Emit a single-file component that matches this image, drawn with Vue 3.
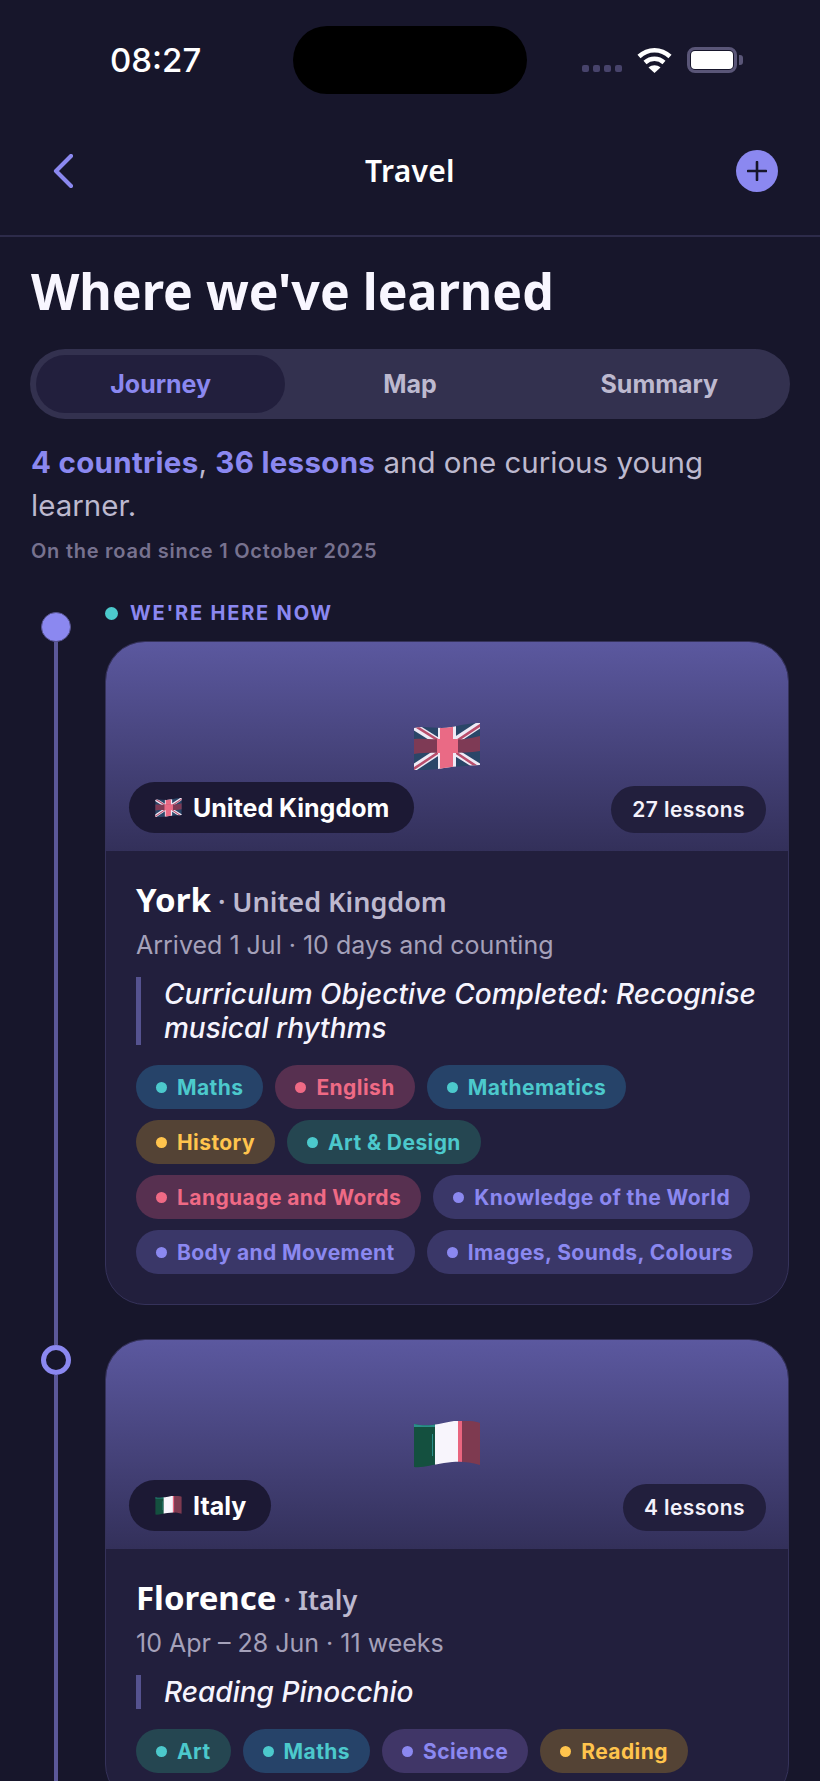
<template>
  <div class="screen">
    <svg class="defs" width="0" height="0" aria-hidden="true">
      <defs>
        <clipPath id="wave-uk">
          <path d="M0 5C12 2 24 7 38 4S58 0 66 0V42C54 43 42 43 30 45S10 47 0 47Z" />
        </clipPath>
        <clipPath id="wave-it">
          <path d="M0 3C14 6 24 3 40 0C52 -1 60 0 66 2V44C52 40 44 40 30 42S10 47 0 46Z" />
        </clipPath>
        <symbol id="flag-uk" viewBox="0 0 66 47">
          <g clip-path="url(#wave-uk)">
            <rect width="66" height="47" fill="#2a4668" />
            <path d="M-2 2L68 46M68 0L-2 46" stroke="#efeaf6" stroke-width="7" />
            <path d="M-2 1L30 21M68 1L38 21M-2 47L28 27M68 47L38 27" stroke="#b84e6c" stroke-width="2.6" />
            <rect x="24" width="18" height="47" fill="#efeaf6" />
            <rect x="26" width="13" height="47" fill="#ea6a85" />
            <path d="M0 16C20 15 42 20 66 13V28C42 32 20 28 0 31Z" fill="#7e3a55" />
            <rect x="23" y="16" width="21" height="14" fill="#ea6a85" />
          </g>
        </symbol>
        <symbol id="flag-it" viewBox="0 0 66 47">
          <g clip-path="url(#wave-it)">
            <rect width="22" height="47" fill="#14503f" />
            <rect width="22" height="3" y="3" fill="#2b8f8a" />
            <rect x="18" y="13" width="1" height="22" fill="#2b8f8a" />
            <rect x="21" width="23" height="47" fill="#f8f5fc" />
            <rect x="44" width="4" height="47" fill="#e9657f" />
            <rect x="48" width="18" height="47" fill="#7e3a50" />
          </g>
        </symbol>
      </defs>
    </svg>

    <div class="status">
      <span class="time">08:27</span>
      <div class="island"></div>
      <div class="status-icons">
        <div class="signal"><i v-for="n in 4" :key="n"></i></div>
        <svg class="wifi" width="35" height="26" viewBox="0 0 35 26">
          <path d="M2 9.5C11 1 24 1 33 9.5" fill="none" stroke="#fff" stroke-width="4.5" />
          <path d="M8 15.5C13.5 10.5 21.5 10.5 27 15.5" fill="none" stroke="#fff" stroke-width="4.5" />
          <path d="M11.5 20.5C15 17.5 20 17.5 23.5 20.5L17.5 26Z" fill="#fff" />
        </svg>
        <div class="battery"><div class="battery-fill"></div></div>
      </div>
    </div>

    <header class="nav">
      <svg class="back" width="20" height="34" viewBox="0 0 20 34">
        <path d="M18 2L3 17L18 32" fill="none" stroke="#8b88f0" stroke-width="4.2" stroke-linecap="round" stroke-linejoin="round" />
      </svg>
      <span class="nav-title">Travel</span>
      <div class="add">
        <svg width="20" height="20" viewBox="0 0 20 20">
          <path d="M10 1V19M1 10H19" stroke="#17162b" stroke-width="2.6" stroke-linecap="round" />
        </svg>
      </div>
    </header>

    <main class="page">
      <h1 class="heading">Where we've learned</h1>

      <div class="tabs">
        <div v-for="t in tabs" :key="t" class="tab" :class="{ active: t === 'Journey' }">{{ t }}</div>
      </div>

      <p class="lead"><b>4 countries</b>, <b>36 lessons</b> and one curious young learner.</p>
      <p class="since">On the road since 1 October 2025</p>

      <div class="timeline">
        <section v-for="(s, i) in stops" :key="s.city" class="stop">
          <div class="rail">
            <div v-if="i > 0" class="rail-stub"></div>
            <div v-else class="rail-gap"></div>
            <div class="node" :class="{ current: s.current }"></div>
            <div class="rail-line"></div>
          </div>
          <div class="stop-main">
            <div v-if="s.current" class="here"><i></i>WE'RE HERE NOW</div>
            <article class="card">
              <div class="hero">
                <svg class="hero-flag"><use :href="'#flag-' + s.flag" /></svg>
                <div class="hero-pills">
                  <span class="country-pill">
                    <svg class="mini-flag"><use :href="'#flag-' + s.flag" /></svg>
                    {{ s.country }}
                  </span>
                  <span class="count-pill">{{ s.lessons }} lessons</span>
                </div>
              </div>
              <div class="body">
                <div class="place"><span class="city">{{ s.city }}</span> · {{ s.country }}</div>
                <div class="dates">{{ s.dates }}</div>
                <blockquote class="note">{{ s.note }}</blockquote>
                <div class="chips">
                  <span v-for="c in s.chips" :key="c.name" class="chip" :class="c.cls"><i></i>{{ c.name }}</span>
                </div>
              </div>
            </article>
          </div>
        </section>
      </div>
    </main>
  </div>
</template>

<script setup>
const tabs = ['Journey', 'Map', 'Summary']

const stops = [
  {
    current: true,
    city: 'York',
    country: 'United Kingdom',
    flag: 'uk',
    lessons: 27,
    dates: 'Arrived 1 Jul · 10 days and counting',
    note: 'Curriculum Objective Completed: Recognise musical rhythms',
    chips: [
      { name: 'Maths', cls: 'blue' },
      { name: 'English', cls: 'pink' },
      { name: 'Mathematics', cls: 'blue' },
      { name: 'History', cls: 'amber' },
      { name: 'Art & Design', cls: 'teal' },
      { name: 'Language and Words', cls: 'pink' },
      { name: 'Knowledge of the World', cls: 'violet' },
      { name: 'Body and Movement', cls: 'violet' },
      { name: 'Images, Sounds, Colours', cls: 'violet' }
    ]
  },
  {
    current: false,
    city: 'Florence',
    country: 'Italy',
    flag: 'it',
    lessons: 4,
    dates: '10 Apr – 28 Jun · 11 weeks',
    note: 'Reading Pinocchio',
    chips: [
      { name: 'Art', cls: 'teal' },
      { name: 'Maths', cls: 'blue' },
      { name: 'Science', cls: 'purple' },
      { name: 'Reading', cls: 'amber' }
    ]
  }
]
</script>

<style scoped>
.screen {
  height: 1781px;
  overflow: hidden;
  background: #17162b;
  color: #fff;
  font-family: Inter, "Liberation Sans", sans-serif;
}
.defs { position: absolute; }

.status { display: flex; height: 68px; padding-top: 26px; }
.time { width: 182px; margin-left: 110px; margin-right: 1px; font-size: 33px; font-weight: 500; line-height: 68px; }
.island { width: 234px; height: 68px; border-radius: 34px; background: #000; }
.status-icons { display: flex; align-items: center; gap: 15px; height: 26px; margin: 21px 0 0 55px; }
.signal { display: flex; gap: 4px; align-self: flex-end; margin-bottom: 1px; }
.signal i { width: 7px; height: 7px; border-radius: 2px; background: #47436b; }
.battery { position: relative; width: 50px; height: 26px; box-sizing: border-box; padding: 1px; border: 3px solid #5a5678; border-radius: 8px; }
.battery::after { content: ""; position: absolute; right: -9px; top: 5px; width: 4px; height: 10px; border-radius: 0 3px 3px 0; background: #5a5678; }
.battery-fill { height: 100%; border-radius: 4px; background: #fff; }

.nav {
  display: grid;
  grid-template-columns: 1fr auto 1fr;
  align-items: center;
  padding: 56px 42px 43px 42px;
  border-bottom: 2px solid #2d2b4a;
}
.back { margin-left: 11px; }
.nav-title { margin-top: -2px; font-family: "Noto Sans", Lato, sans-serif; font-size: 30px; font-weight: 600; letter-spacing: 0.3px; }
.add {
  display: flex;
  align-items: center;
  justify-content: center;
  justify-self: end;
  width: 42px;
  height: 42px;
  border-radius: 50%;
  background: #8b88f0;
}

.page { padding: 0 30px; }
.heading {
  margin: 24px 0 28px 1px;
  font-family: "Noto Sans", Lato, sans-serif;
  font-size: 50px;
  font-weight: 700;
  line-height: 60px;
  color: #f8f6ff;
}

.tabs {
  display: grid;
  grid-template-columns: repeat(3, 1fr);
  height: 70px;
  box-sizing: border-box;
  padding: 6px;
  border-radius: 35px;
  background: #33314f;
}
.tab { display: flex; align-items: center; justify-content: center; border-radius: 29px; font-size: 25px; font-weight: 700; color: #bdb9cf; }
.tab.active { background: #221f3d; color: #8b88f0; }

.lead { margin: 22px 30px 0 1px; font-size: 29.5px; line-height: 43px; color: #bdb9cf; }
.lead b { font-weight: 700; letter-spacing: 0.3px; color: #8b88f0; }
.since { margin: 10px 0 0 1px; font-size: 20px; font-weight: 600; line-height: 28px; letter-spacing: 0.75px; color: #77728f; }

.timeline { margin-top: 36px; }
.stop { display: flex; }
.rail { display: flex; flex-direction: column; align-items: center; flex: none; width: 30px; margin: 0 34px 0 11px; }
.rail-gap { height: 11px; }
.rail-stub { width: 4px; height: 6px; background: #5b5899; }
.rail-line { flex: 1; width: 4px; background: #5b5899; }
.node { box-sizing: border-box; width: 30px; height: 30px; border: 5px solid #8b88f0; border-radius: 50%; background: #17162b; }
.node.current { border: 1px solid #57548f; background: #8b88f0; }

.stop-main { flex: 1; min-width: 0; margin-right: 1px; padding-bottom: 34px; }
.here { display: flex; align-items: center; gap: 12px; margin-bottom: 16px; font-size: 20px; font-weight: 700; line-height: 24px; letter-spacing: 1.8px; color: #8b88f0; }
.here i { width: 13px; height: 13px; border-radius: 50%; background: #4cc9cc; }

.card { overflow: hidden; border: 1px solid #35325a; border-radius: 40px; background: #221f3d; }
.hero {
  position: relative;
  display: flex;
  align-items: center;
  justify-content: center;
  height: 209px;
  background: linear-gradient(180deg, #5b589f 0%, #33305a 100%);
}
.hero-flag { width: 66px; height: 47px; }
.hero-pills { position: absolute; left: 23px; right: 22px; bottom: 18px; display: flex; align-items: flex-end; justify-content: space-between; }
.country-pill { display: flex; align-items: center; gap: 11px; height: 51px; padding: 0 25px 0 26px; border-radius: 26px; background: #1c1934; font-size: 25px; font-weight: 700; }
.mini-flag { width: 27px; height: 19px; }
.count-pill { display: flex; align-items: center; height: 47px; padding: 0 21px; border-radius: 24px; background: #221f3d; font-size: 21px; font-weight: 600; letter-spacing: 0.4px; color: #f4f2fb; }

.body { padding: 28px 28px 30px 30px; }
.place { font-family: "Noto Sans", Lato, sans-serif; font-size: 27px; font-weight: 600; line-height: 41px; color: #bdb9cf; }
.city { font-size: 33px; font-weight: 700; color: #fff; }
.dates { margin-top: 7px; font-size: 25px; line-height: 32px; color: #a5a1ba; }
.note { margin: 16px 0 0; padding-left: 23px; border-left: 5px solid #55528f; font-size: 28px; font-style: italic; font-weight: 500; line-height: 34px; color: #f6f4fd; }

.chips { display: flex; flex-wrap: wrap; gap: 11px 12px; margin-top: 20px; }
.chip { display: flex; align-items: center; gap: 10px; height: 44px; padding: 0 20px; border-radius: 22px; font-size: 21px; font-weight: 700; letter-spacing: 0.42px; }
.chip i { width: 11px; height: 11px; border-radius: 50%; background: currentColor; }
.blue { background: #264369; color: #4cc9cc; }
.pink { background: #573050; color: #ef6a85; }
.amber { background: #544335; color: #ffc44d; }
.teal { background: #254651; color: #4cc9cc; }
.violet { background: #3a3768; color: #8b88f0; }
.purple { background: #403667; color: #8b88f0; }
</style>

<style>
body { background: #17162b; }
</style>
